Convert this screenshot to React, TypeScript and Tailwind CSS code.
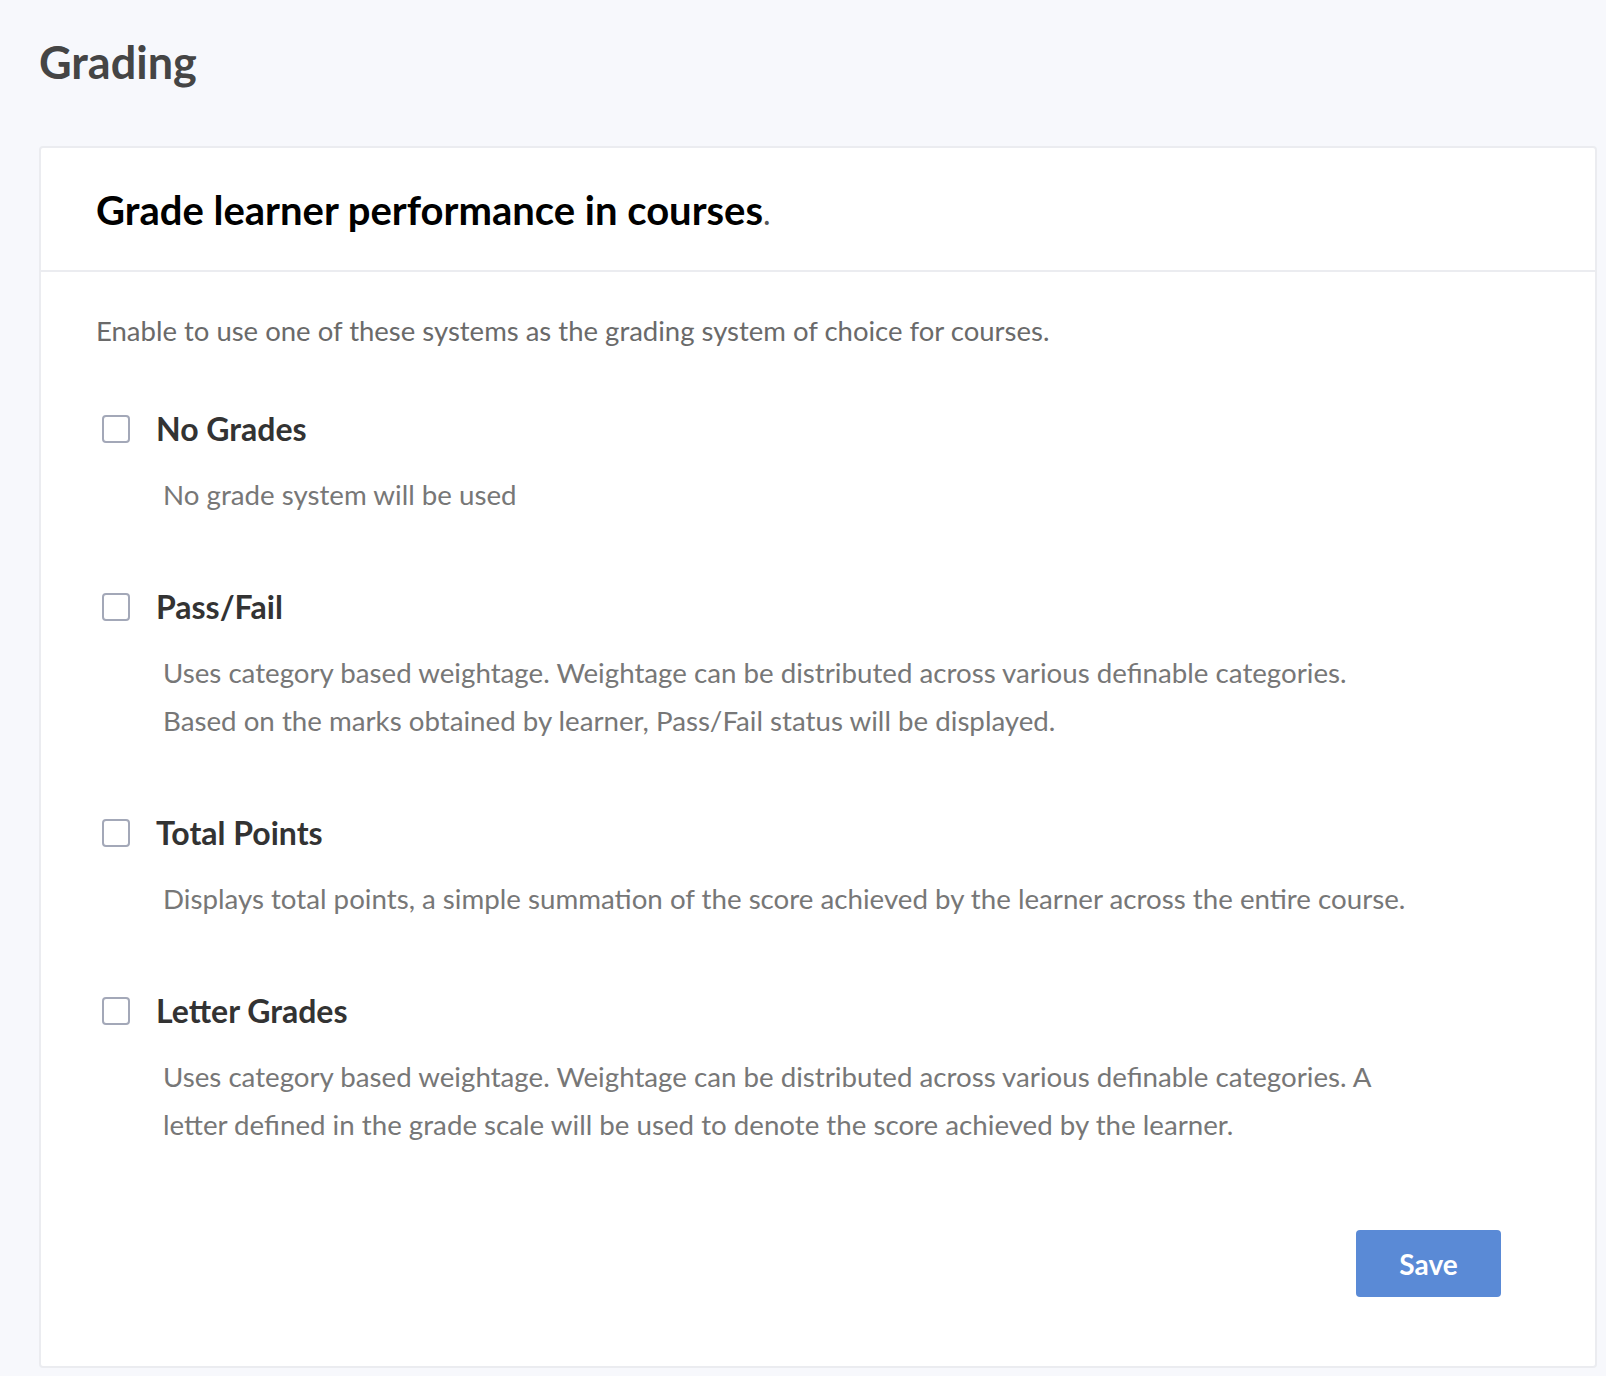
import React from "react";

const options = [
  {
    title: "No Grades",
    lines: ["No grade system will be used"],
  },
  {
    title: "Pass/Fail",
    lines: [
      "Uses category based weightage. Weightage can be distributed across various definable categories.",
      "Based on the marks obtained by learner, Pass/Fail status will be displayed.",
    ],
  },
  {
    title: "Total Points",
    lines: [
      "Displays total points, a simple summation of the score achieved by the learner across the entire course.",
    ],
  },
  {
    title: "Letter Grades",
    lines: [
      "Uses category based weightage. Weightage can be distributed across various definable categories. A",
      "letter defined in the grade scale will be used to denote the score achieved by the learner.",
    ],
  },
];

const App = () => {
  return (
    <div className="min-h-screen bg-[#f7f8fc] px-[39px] pt-[34px] pb-[8px] font-['Lato','Liberation_Sans',sans-serif]">
      <h1 className="text-[45px] leading-[56px] font-bold text-[#454545]">Grading</h1>

      <div className="mt-[56px] w-[1558px] bg-white border-2 border-[#ebecf0] rounded-[4px]">
        {/* Header */}
        <div className="h-[124px] flex items-center pl-[55px] pt-[5px] border-b-2 border-[#ebecf0]">
          <h2 className="text-[40px] leading-[48px] font-bold text-black">
            Grade learner performance in courses<span className="text-[#555] font-normal text-[32px]">.</span>
          </h2>
        </div>

        {/* Body */}
        <div className="pl-[55px] pr-[94px] pt-[35px] pb-[69px]">
          <p className="text-[27.5px] leading-[48px] text-[#6a6a6a]">
            Enable to use one of these systems as the grading system of choice for courses.
          </p>

          <div className="mt-[54px] flex flex-col gap-[68px]">
            {options.map((opt) => (
              <div key={opt.title}>
                <label className="flex items-center h-[40px] cursor-pointer">
                  <span className="ml-[6px] w-[28px] h-[28px] rounded-[4px] border-2 border-[#a3a8b8] bg-white" />
                  <span className="ml-[26px] text-[32px] leading-[40px] font-bold text-[#333]">
                    {opt.title}
                  </span>
                </label>
                <div className="mt-[22px] ml-[67px] text-[27.7px] leading-[48px] text-[#777]">
                  {opt.lines.map((l) => (
                    <p key={l} className="whitespace-nowrap">{l}</p>
                  ))}
                </div>
              </div>
            ))}
          </div>

          <div className="mt-[81px] flex justify-end">
            <button className="w-[145px] h-[67px] rounded-[4px] bg-[#5a8ad6] text-white text-[28px] font-bold">
              Save
            </button>
          </div>
        </div>
      </div>
    </div>
  );
};

export default App;
